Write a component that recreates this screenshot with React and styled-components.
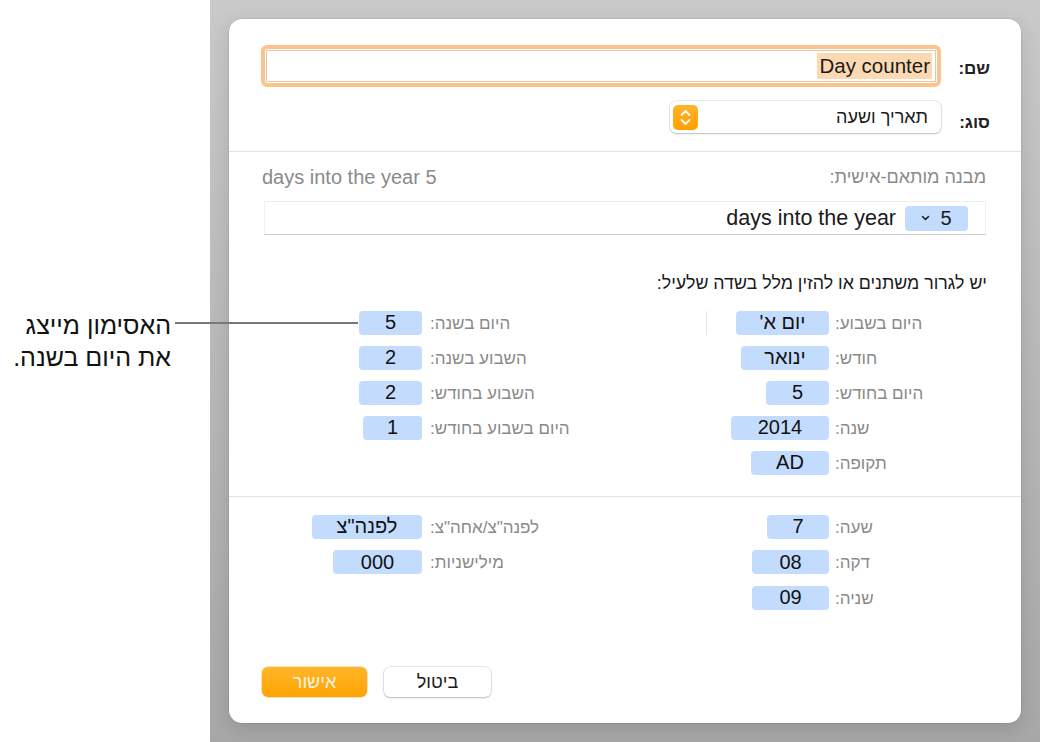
import React from 'react';
import styled, { createGlobalStyle } from 'styled-components';

const Global = createGlobalStyle`
  body {
    margin: 0;
    font-family: "Liberation Sans", "DejaVu Sans", sans-serif;
    background: #fff;
  }
`;

const Page = styled.div`
  position: relative;
  display: flex;
  width: 1040px;
  height: 742px;
  overflow: hidden;
`;

const Gutter = styled.div`
  width: 210px;
  flex: none;
  background: #fff;
`;

const Backdrop = styled.div`
  flex: 1;
  padding: 19px;
  background: linear-gradient(#c9c9c9, #a7a7a7);
`;

const Dialog = styled.div`
  width: 792px;
  height: 704px;
  box-sizing: border-box;
  background: #fff;
  border-radius: 13px;
  box-shadow: 0 0 0 0.5px rgba(0,0,0,0.12), 0 6px 20px rgba(0,0,0,0.12);
  direction: rtl;
  display: flex;
  flex-direction: column;
`;

const Section = styled.div`
  padding: ${p => p.$pad};
  border-bottom: ${p => (p.$line ? '1px solid #e2e2e2' : 'none')};
  display: flex;
  flex-direction: column;
  flex: ${p => (p.$grow ? 1 : 'none')};
`;

const FormRow = styled.div`
  display: flex;
  align-items: center;
  height: ${p => p.$h}px;
  margin-top: ${p => p.$mt || 0}px;
  padding: 0 31px 0 32px;
`;

const FormLabel = styled.div`
  width: 49px;
  flex: none;
  padding-top: ${p => p.$drop || 0}px;
  font-size: 17px;
  font-weight: bold;
  color: #222;
`;

const NameField = styled.div`
  flex: 1;
  height: 42px;
  box-sizing: border-box;
  border: 4px solid #fbc38e;
  border-radius: 6px;
  padding: 1px;
  display: flex;
`;

const NameInner = styled.div`
  flex: 1;
  border: 1px solid #e9c6a0;
  display: flex;
  align-items: center;
  padding-right: 3px;
`;

const Selected = styled.span`
  background: #fdd9b3;
  font-size: 20.5px;
  line-height: 26px;
  padding: 0 2px;
  color: #1a1a1a;
  direction: ltr;
`;

const Popup = styled.div`
  width: 271px;
  height: 32px;
  box-sizing: border-box;
  border-radius: 6px;
  background: #fff;
  box-shadow: 0 0 0 0.5px rgba(0,0,0,0.14), 0 1px 2px rgba(0,0,0,0.2);
  display: flex;
  align-items: center;
  justify-content: space-between;
  padding: 0 13px 0 3px;
  font-size: 18px;
  color: #1a1a1a;
`;

const GrayLine = styled.div`
  display: flex;
  justify-content: space-between;
  align-items: center;
  height: 20px;
  margin-top: 15px;
  padding: 0 35px 0 33px;
  font-size: 18px;
  color: #8a8a8a;
`;

const Ltr = styled.span`
  direction: ltr;
  font-size: ${p => p.$size || 'inherit'};
`;

const TokenField = styled.div`
  margin: 14px 35px 0 35px;
  height: 33px;
  box-sizing: border-box;
  border-top: 1px solid #ececec;
  border-left: 1px solid #f1f1f1;
  border-right: 1px solid #f1f1f1;
  box-shadow: 0 1px 0 #cfcfcf;
  display: flex;
  align-items: center;
  gap: 9px;
  padding-right: 17px;
  font-size: 21.5px;
  color: #1a1a1a;
`;

const Chip = styled.span`
  display: inline-flex;
  align-items: center;
  justify-content: center;
  gap: 10px;
  height: 25px;
  width: 63px;
  border-radius: 4px;
  background: #c3dcfd;
  font-size: 20px;
`;

const Hint = styled.div`
  margin-top: 39px;
  height: 20px;
  line-height: 20px;
  padding-right: 34px;
  font-size: 17.8px;
  color: #1a1a1a;
`;

const Grid = styled.div`
  display: grid;
  grid-template-columns: 152px 253px 152px 1fr;
  grid-auto-rows: ${p => p.$row}px;
  align-items: center;
  margin-top: ${p => p.$mt}px;
  padding-right: 34px;
`;

const Label = styled.div`
  text-align: left;
  padding-top: 2px;
  font-size: 17px;
  color: #8a8a8a;
  white-space: nowrap;
`;

const TokenCell = styled.div`
  position: relative;
  display: flex;
  justify-content: flex-start;
  padding-right: ${p => p.$inset}px;
`;

const Token = styled.span`
  display: inline-flex;
  align-items: center;
  justify-content: center;
  height: 24px;
  width: ${p => p.$w}px;
  border-radius: 4px;
  background: #c3dcfd;
  font-size: 20px;
  color: #111;
`;

const DropCaret = styled.span`
  position: absolute;
  left: 124px;
  top: 0;
  width: 1px;
  height: 24px;
  background: #e4e8ee;
`;

const Buttons = styled.div`
  margin-top: auto;
  margin-bottom: 26px;
  display: flex;
  justify-content: flex-end;
  gap: 17px;
  padding-left: 33px;
`;

const Button = styled.button`
  width: ${p => p.$w}px;
  height: 30px;
  border-radius: 6px;
  font-family: inherit;
  font-size: 18px;
  border: none;
  color: ${p => (p.$primary ? '#fff4e6' : '#1a1a1a')};
  background: ${p => (p.$primary ? 'linear-gradient(#ffb62a, #ffa300)' : '#fff')};
  box-shadow: ${p => (p.$primary
    ? '0 0 0 0.5px rgba(230,140,0,0.5)'
    : '0 0 0 0.5px rgba(0,0,0,0.15), 0 1px 2px rgba(0,0,0,0.22)')};
`;

const Callout = styled.div`
  position: absolute;
  left: 0;
  top: 309px;
  width: 171px;
  direction: rtl;
  text-align: right;
  font-size: 25px;
  line-height: 32px;
  color: #111;
`;

const Leader = styled.div`
  position: absolute;
  left: 175px;
  top: 322px;
  width: 183px;
  height: 2px;
  background: #787878;
`;

function Stepper() {
  return (
    <svg width="25" height="25" viewBox="0 0 25 25">
      <defs>
        <linearGradient id="st" x1="0" y1="0" x2="0" y2="1">
          <stop offset="0" stopColor="#ffb42c" />
          <stop offset="1" stopColor="#ff9f00" />
        </linearGradient>
      </defs>
      <rect x="0" y="0" width="25" height="25" rx="5" fill="url(#st)" />
      <path d="M8.5 10 L12.5 6 L16.5 10" fill="none" stroke="#fff" strokeWidth="1.8" strokeLinecap="round" strokeLinejoin="round" />
      <path d="M8.5 15 L12.5 19 L16.5 15" fill="none" stroke="#fff" strokeWidth="1.8" strokeLinecap="round" strokeLinejoin="round" />
    </svg>
  );
}

function Chevron() {
  return (
    <svg width="9" height="6" viewBox="0 0 9 6">
      <path d="M1.5 1.5 L4.5 4.5 L7.5 1.5" fill="none" stroke="#222" strokeWidth="1.6" strokeLinecap="round" strokeLinejoin="round" />
    </svg>
  );
}

const dateRight = [
  ['היום בשבוע:', "יום א'", 93],
  ['חודש:', 'ינואר', 88],
  ['היום בחודש:', '5', 63],
  ['שנה:', '2014', 98],
  ['תקופה:', 'AD', 78],
];

const dateLeft = [
  ['היום בשנה:', '5', 63],
  ['השבוע בשנה:', '2', 63],
  ['השבוע בחודש:', '2', 63],
  ['היום בשבוע בחודש:', '1', 59],
];

const timeRight = [
  ['שעה:', '7', 62],
  ['דקה:', '08', 77],
  ['שניה:', '09', 77],
];

const timeLeft = [
  ['לפנה"צ/אחה"צ:', 'לפנה"צ', 110],
  ['מילישניות:', '000', 89],
];

function Fields({ right, left, caret }) {
  const rows = Math.max(right.length, left.length);
  const cells = [];
  for (let i = 0; i < rows; i++) {
    const r = right[i];
    const l = left[i];
    cells.push(
      <Label key={'rl' + i}>{r ? r[0] : ''}</Label>,
      <TokenCell key={'rt' + i} $inset={6}>
        {r && <Token $w={r[2]}>{r[1]}</Token>}
        {caret && i === 0 && <DropCaret />}
      </TokenCell>,
      <Label key={'ll' + i}>{l ? l[0] : ''}</Label>,
      <TokenCell key={'lt' + i} $inset={8}>
        {l && <Token $w={l[2]}>{l[1]}</Token>}
      </TokenCell>
    );
  }
  return cells;
}

export default function App() {
  return (
    <>
      <Global />
      <Page>
        <Gutter />
        <Backdrop>
          <Dialog>
            <Section $pad="26px 0 18px 0" $line>
              <FormRow $h={42}>
                <FormLabel $drop={5}>שם:</FormLabel>
                <NameField>
                  <NameInner>
                    <Selected>Day counter</Selected>
                  </NameInner>
                </NameField>
              </FormRow>
              <FormRow $h={32} $mt={14}>
                <FormLabel $drop={12}>סוג:</FormLabel>
                <Popup>
                  <span>תאריך ושעה</span>
                  <Stepper />
                </Popup>
              </FormRow>
            </Section>

            <Section $pad="0 0 16px 0" $line>
              <GrayLine>
                <span>מבנה מותאם-אישית:</span>
                <Ltr $size="20px">days into the year 5</Ltr>
              </GrayLine>
              <TokenField>
                <Chip>
                  <span>5</span>
                  <Chevron />
                </Chip>
                <Ltr>days into the year</Ltr>
              </TokenField>
              <Hint>יש לגרור משתנים או להזין מלל בשדה שלעיל:</Hint>
              <Grid $row={35} $mt={12}>
                <Fields right={dateRight} left={dateLeft} caret />
              </Grid>
            </Section>

            <Section $pad="0" $grow>
              <Grid $row={35.5} $mt={12}>
                <Fields right={timeRight} left={timeLeft} />
              </Grid>
              <Buttons>
                <Button $w={107}>ביטול</Button>
                <Button $w={105} $primary>אישור</Button>
              </Buttons>
            </Section>
          </Dialog>
        </Backdrop>
        <Leader />
        <Callout>
          האסימון מייצג
          <br />
          את היום בשנה.
        </Callout>
      </Page>
    </>
  );
}
